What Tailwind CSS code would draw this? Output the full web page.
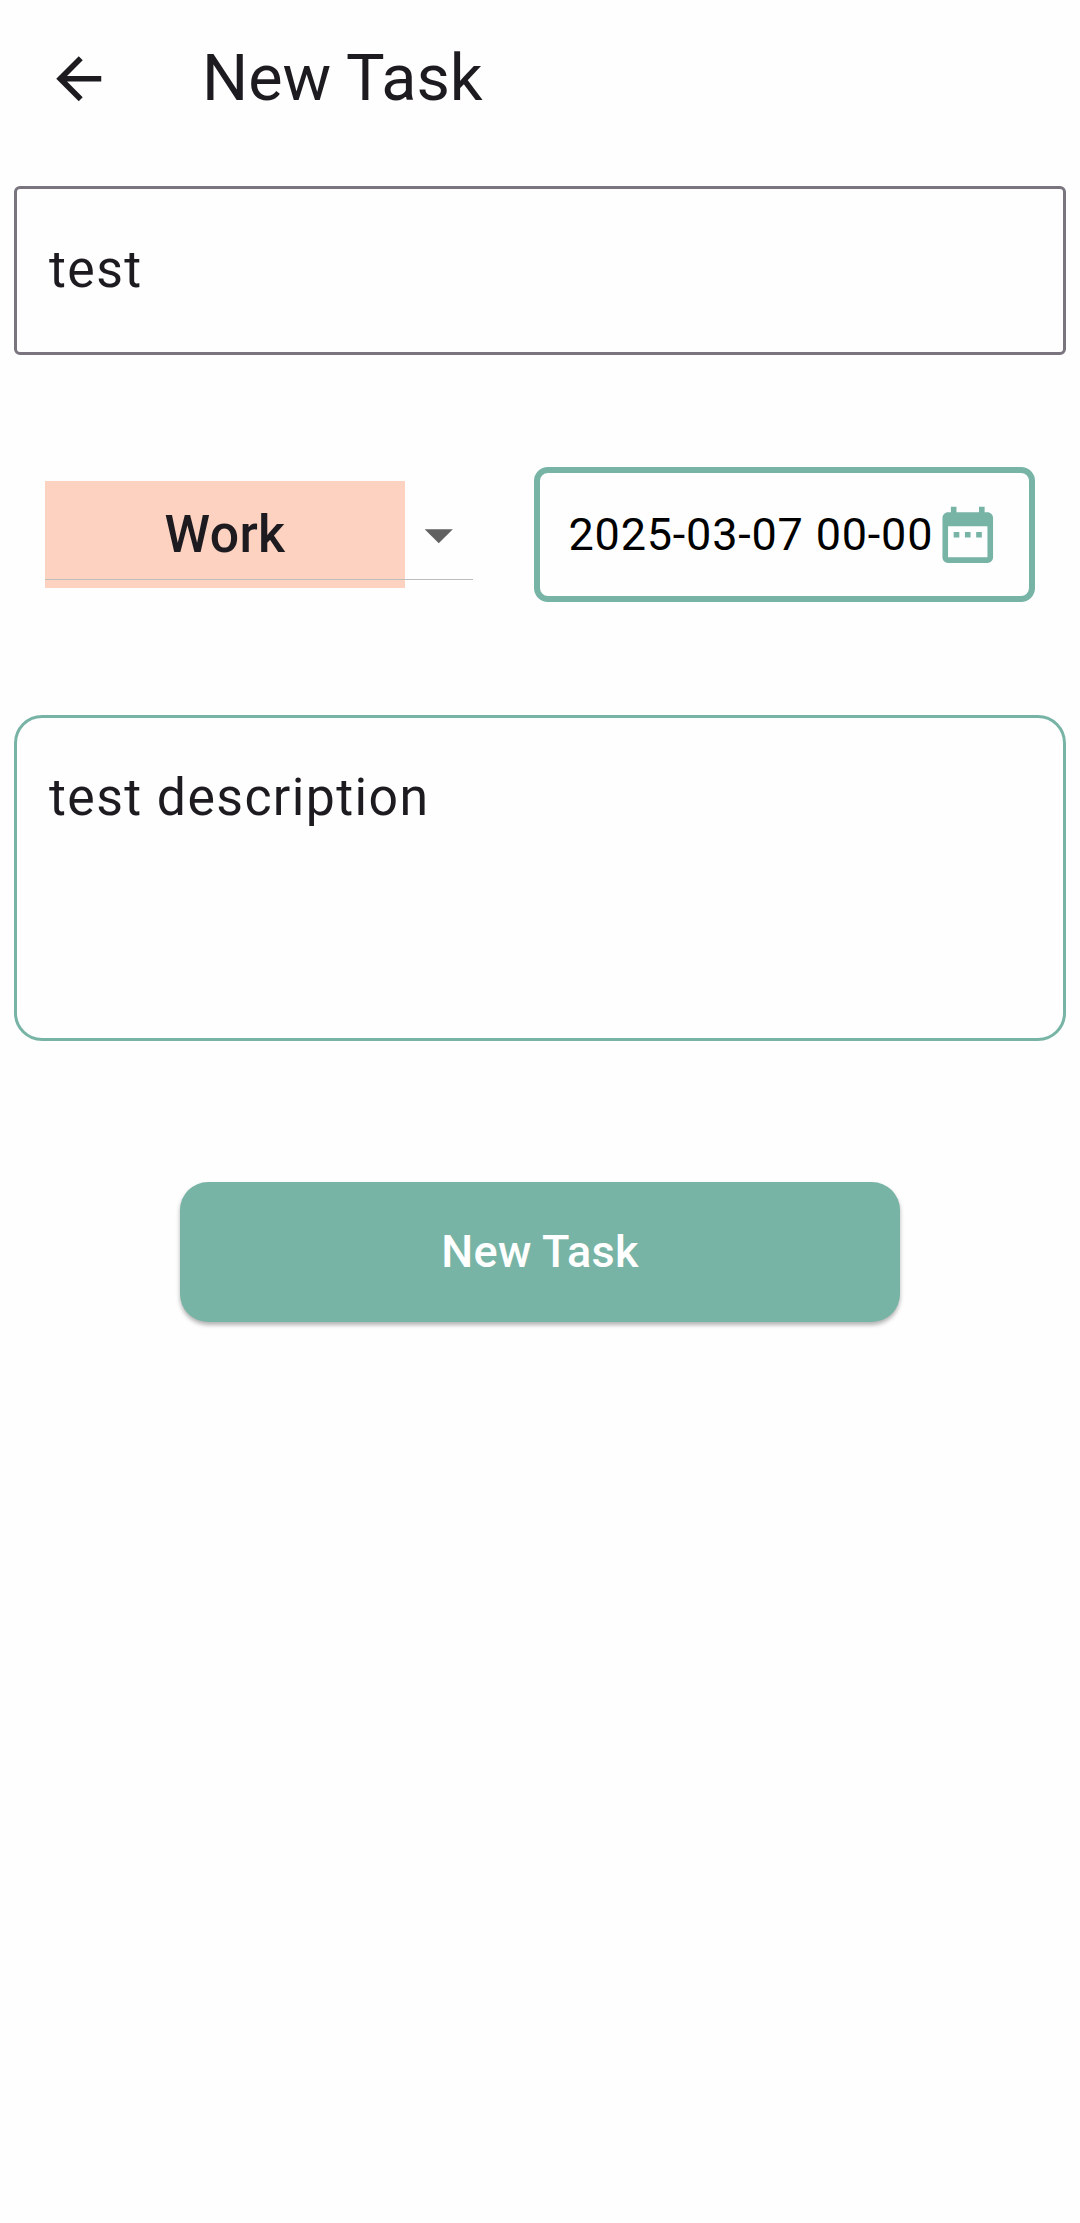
<!DOCTYPE html>
<html lang="en">
<head>
<meta charset="utf-8">
<title>New Task</title>
<script src="https://cdn.jsdelivr.net/npm/@tailwindcss/browser@4"></script>
</head>
<body class="min-h-screen bg-[#fefefe] font-['Roboto',sans-serif] text-[#1d1b20]">
  <header class="flex h-[158px] items-center pl-[45px]">
    <button class="size-[67.5px]" aria-label="Back">
      <svg class="size-full" viewBox="0 0 24 24" fill="currentColor"><path d="M20 11H7.83l5.59-5.59L12 4l-8 8 8 8 1.41-1.41L7.83 13H20v-2z"/></svg>
    </button>
    <h1 class="ml-[89.5px] pb-[3px] text-[64.8px] leading-[76px]">New Task</h1>
  </header>
  <main class="flex flex-col px-[14px] pt-[28px]">
    <div class="flex h-[169px] items-center rounded-[6px] border-[3px] border-[#79747e] pb-[2px] pl-[32px] text-[51.75px] leading-[78px] tracking-[1.4px]">test</div>
    <div class="mt-[112px] flex h-[135px] items-center justify-between pr-[31px] pl-[31px]">
      <div class="relative flex items-center">
        <div class="flex h-[107px] w-[360px] items-center justify-center bg-[#fdd2c0] text-[51.75px] font-medium tracking-[0.4px]">Work</div>
        <svg class="size-[67.5px]" viewBox="0 0 24 24" fill="#616161"><path d="M7 10l5 5 5-5z"/></svg>
        <div class="absolute bottom-[8px] left-0 h-px w-full bg-[#bdbdbd]"></div>
      </div>
      <div class="flex h-[135px] w-[501px] items-center rounded-[14px] border-[6px] border-[#78b4a6] pl-[28.5px] text-black">
        <span class="w-[365px] text-[45px] tracking-[0.8px] whitespace-nowrap">2025-03-07 00-00</span>
        <svg class="size-[67.5px] shrink-0" viewBox="0 0 24 24" fill="#78b4a6"><path d="M9 11H7v2h2v-2zm4 0h-2v2h2v-2zm4 0h-2v2h2v-2zm2-7h-1V2h-2v2H8V2H6v2H5c-1.11 0-1.99.9-1.99 2L3 20c0 1.1.89 2 2 2h14c1.1 0 2-.9 2-2V6c0-1.1-.9-2-2-2zm0 16H5V9h14v11z"/></svg>
      </div>
    </div>
    <div class="mt-[112.5px] h-[326px] rounded-[28px] border-[3px] border-[#78b4a6] pt-[41px] pl-[32px] text-[51.75px] leading-[78px] tracking-[1.4px]">test description</div>
    <button class="mt-[141px] flex h-[140.5px] w-[720px] items-center justify-center self-center rounded-[28px] bg-[#78b4a6] text-[45px] font-medium tracking-[0.3px] text-white shadow-[0_3px_4px_rgba(0,0,0,0.3)]">New Task</button>
  </main>
</body>
</html>
